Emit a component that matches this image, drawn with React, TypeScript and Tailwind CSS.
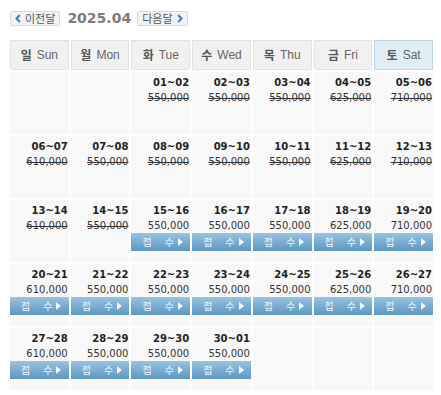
import React from "react";

// Monthly booking calendar — 2025.04
const KR = "font-['Noto_Sans_CJK_KR',sans-serif]";
const NUM = "font-['DejaVu_Sans',Verdana,sans-serif]";

type Cell = { d: string; price: string; closed?: boolean } | null;

const DAYS = [
  { kr: "일", en: "Sun" },
  { kr: "월", en: "Mon" },
  { kr: "화", en: "Tue" },
  { kr: "수", en: "Wed" },
  { kr: "목", en: "Thu" },
  { kr: "금", en: "Fri" },
  { kr: "토", en: "Sat" },
];

const PRICE = ["610,000", "550,000", "550,000", "550,000", "550,000", "625,000", "710,000"];

function pad(n: number) {
  return String(n).padStart(2, "0");
}

function buildCells(): Cell[] {
  const cells: Cell[] = [null, null];
  for (let day = 1; day <= 30; day++) {
    const col = (day + 1) % 7;
    const next = day === 30 ? 1 : day + 1;
    cells.push({ d: `${pad(day)}~${pad(next)}`, price: PRICE[col], closed: day <= 14 });
  }
  while (cells.length % 7) cells.push(null);
  return cells;
}

function NavButton({ label, dir }: { label: string; dir: "prev" | "next" }) {
  const chevron = (
    <svg width="6" height="9" viewBox="0 0 6 9" className="shrink-0">
      <path
        d={dir === "prev" ? "M4.8 1 L1.5 4.5 L4.8 8" : "M1.2 1 L4.5 4.5 L1.2 8"}
        fill="none"
        stroke="#3b7cc0"
        strokeWidth="2"
      />
    </svg>
  );
  return (
    <div className="flex items-center gap-[4px] h-[15px] px-[4px] border border-[#d6d9de] bg-[#f1f3f6] rounded-[2px]">
      {dir === "prev" && chevron}
      <span className={KR + " text-[11px] leading-none text-[#555]"}>{label}</span>
      {dir === "next" && chevron}
    </div>
  );
}

function DayCell({ cell }: { cell: Cell }) {
  if (!cell) return <div className="h-[62px] bg-[#f8f8f9]" />;
  return (
    <div className="h-[62px] bg-[#f8f8f9] pt-[4px] flex flex-col">
      <div className={NUM + " text-right pr-[1px] text-[10px] leading-[13px] font-bold text-[#222]"}>{cell.d}</div>
      <div
        className={
          NUM +
          " mt-[2px] text-right pr-[1px] text-[10px] leading-[13px] text-[#333] " +
          (cell.closed ? "line-through" : "")
        }
      >
        {cell.price}
      </div>
      {!cell.closed && (
        <div className="mt-[1px] h-[18px] flex items-center pl-[11px] bg-gradient-to-b from-[#98c3df] to-[#5c97c4]">
          <span className={KR + " text-[10px] leading-none text-[#eef5fb]"}>접</span>
          <span className={KR + " ml-[13px] text-[10px] leading-none text-[#eef5fb]"}>수</span>
          <svg width="5" height="8" viewBox="0 0 5 8" className="ml-[4px]">
            <path d="M0 0 L5 4 L0 8 Z" fill="#f4f8fc" />
          </svg>
        </div>
      )}
    </div>
  );
}

export default function App() {
  const cells = buildCells();
  return (
    <div className="w-[441px] h-[395px] bg-white pl-[10px] pr-[8px] pt-[10px]">
      <div className="flex items-center h-[16px]">
        <NavButton label="이전달" dir="prev" />
        <span className={NUM + " ml-[7px] text-[14px] font-bold leading-none text-[#7b7b7b]"}>2025.04</span>
        <div className="ml-[6px]">
          <NavButton label="다음달" dir="next" />
        </div>
      </div>

      <div className="mt-[14px] grid grid-cols-7 gap-[2px] w-[423px]">
        {DAYS.map((day, i) => (
          <div
            key={day.en}
            className={
              "h-[30px] flex items-center justify-center gap-[5px] border " +
              (i === 6 ? "bg-[#dfeef5] border-[#b8d7e6]" : "bg-[#f1f1f1] border-[#e2e2e2]")
            }
          >
            <span className={KR + " text-[12px] font-bold leading-none text-[#555]"}>{day.kr}</span>
            <span className={"font-['Liberation_Sans',Arial,sans-serif] text-[12px] leading-none text-[#666]"}>
              {day.en}
            </span>
          </div>
        ))}
        {cells.map((c, i) => (
          <DayCell key={i} cell={c} />
        ))}
      </div>
    </div>
  );
}
